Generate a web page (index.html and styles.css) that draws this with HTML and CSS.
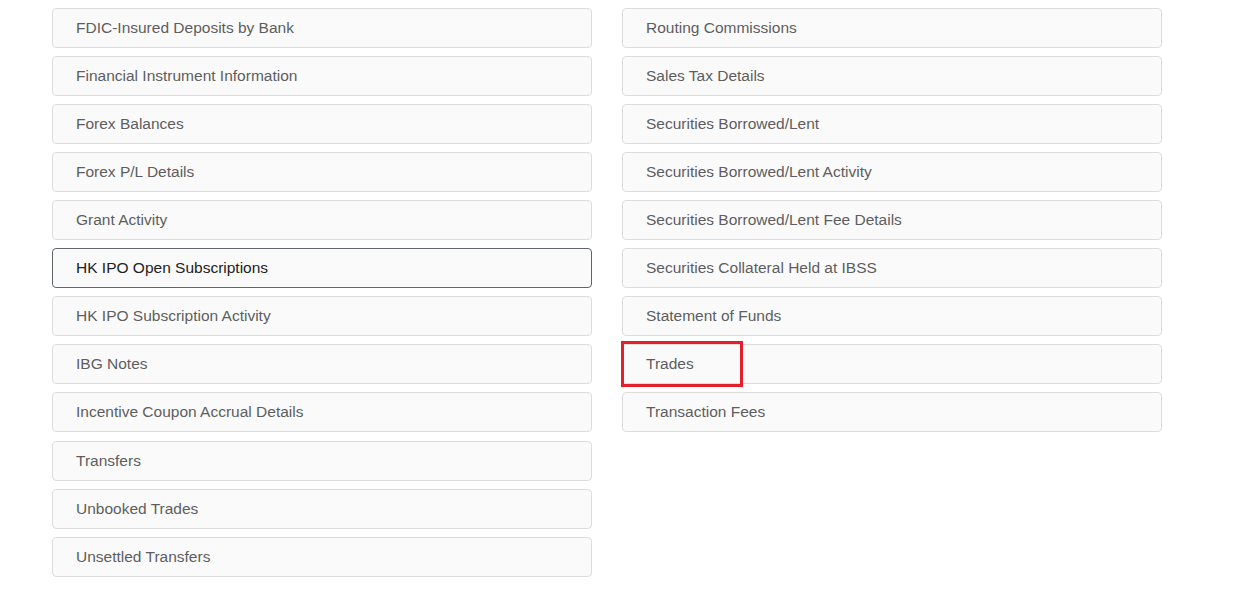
FILE: index.html
```html
<!DOCTYPE html>
<html lang="en">
  <head>
    <meta charset="UTF-8" />
    <meta name="viewport" content="width=device-width, initial-scale=1.0" />
    <title>Reports</title>
    <link rel="stylesheet" href="styles.css">
  </head>
  <body>
    <div class="container">
      <div class="column">
        <div class="group">
          <a class="item">FDIC-Insured Deposits by Bank</a>
          <a class="item">Financial Instrument Information</a>
          <a class="item">Forex Balances</a>
          <a class="item">Forex P/L Details</a>
          <a class="item">Grant Activity</a>
          <a class="item active">HK IPO Open Subscriptions</a>
          <a class="item">HK IPO Subscription Activity</a>
          <a class="item">IBG Notes</a>
          <a class="item">Incentive Coupon Accrual Details</a>
        </div>
        <div class="group more">
          <a class="item">Transfers</a>
          <a class="item">Unbooked Trades</a>
          <a class="item">Unsettled Transfers</a>
        </div>
      </div>
      <div class="column">
        <div class="group">
          <a class="item">Routing Commissions</a>
          <a class="item">Sales Tax Details</a>
          <a class="item">Securities Borrowed/Lent</a>
          <a class="item">Securities Borrowed/Lent Activity</a>
          <a class="item">Securities Borrowed/Lent Fee Details</a>
          <a class="item">Securities Collateral Held at IBSS</a>
          <a class="item">Statement of Funds</a>
          <a class="item">Trades<span class="highlight"></span></a>
          <a class="item">Transaction Fees</a>
        </div>
      </div>
    </div>
  </body>
</html>
```

FILE: styles.css
```css
body {
  margin: 0;
  background-color: #fff;
  font-family: "Liberation Sans", Arial, sans-serif;
}
.container {
  display: flex;
  gap: 30px;
  padding: 8px 0 0 52px;
}
.column {
  width: 540px;
}
.group {
  display: flex;
  flex-direction: column;
  gap: 8px;
}
.group.more {
  margin-top: 9px;
}
.item {
  position: relative;
  display: block;
  height: 38px;
  line-height: 38px;
  padding: 0 23px;
  border: 1px solid #dcdcdc;
  border-radius: 4px;
  background-color: #fafafa;
  color: #5e5e5e;
  font-size: 15.5px;
  cursor: pointer;
}
.item.active {
  border-color: #5f646b;
  color: #222;
}
.highlight {
  position: absolute;
  left: -2px;
  top: -4px;
  width: 116px;
  height: 40px;
  border: 3px solid #e3202a;
}
```
